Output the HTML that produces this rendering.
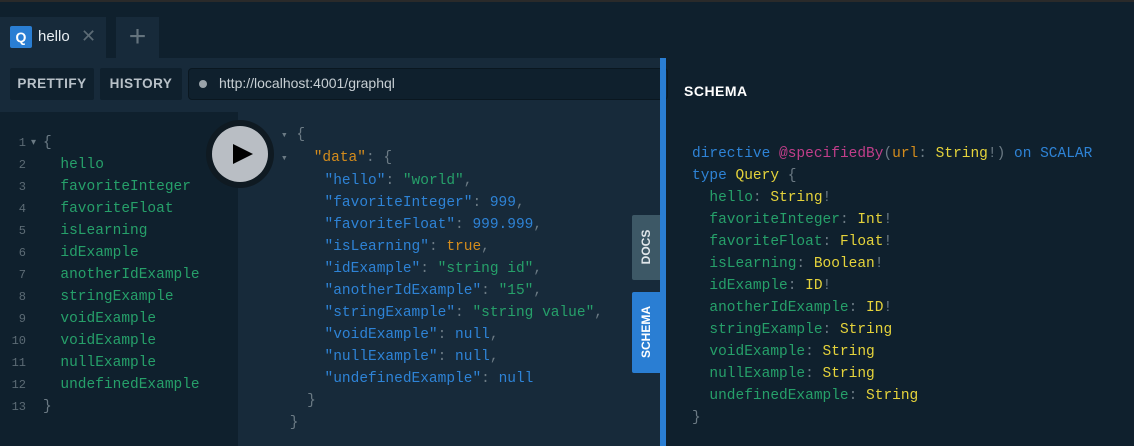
<!DOCTYPE html><html><head><style>
*{margin:0;padding:0;box-sizing:border-box}
html,body{width:1134px;height:446px;overflow:hidden}
body{background:#0f202d;position:relative;font-family:"Liberation Sans",sans-serif}
.abs{position:absolute}
.mono{font-family:"Liberation Mono",monospace;font-size:14.5px;white-space:pre}
.g{color:#26a06a}.b{color:#2e83d6}.o{color:#d48c1c}.y{color:#e5d33b}.p{color:#c13e8a}.gr{color:#6b7a84}
</style></head><body>
<div class="abs" style="left:0;top:0;width:1134px;height:2px;background:#2a2a2a"></div>
<div class="abs" style="left:0;top:17px;width:106px;height:41px;background:#172a3a"></div>
<div class="abs" style="left:10px;top:26px;width:22px;height:22px;background:#2a7ed3;border-radius:2px;color:#fff;font-weight:bold;font-size:14px;text-align:center;line-height:22px">Q</div>
<div class="abs" style="left:38px;top:28px;color:#e8eef2;font-size:15px">hello</div>
<div class="abs" style="left:81px;top:26px;color:#5c6b75;font-size:18px">✕</div>
<div class="abs" style="left:116px;top:17px;width:43px;height:41px;background:#172a3a;color:#64737d;font-size:30px;text-align:center;line-height:40px">+</div>
<div class="abs" style="left:0;top:58px;width:660px;height:54px;background:#172a3a"></div>
<div class="abs" style="left:10px;top:68px;width:84px;height:32px;background:#0f202d;border-radius:2px;color:#b8c1c8;font-size:13.5px;font-weight:bold;letter-spacing:.5px;text-align:center;line-height:32px">PRETTIFY</div>
<div class="abs" style="left:100px;top:68px;width:82px;height:32px;background:#0f202d;border-radius:2px;color:#b8c1c8;font-size:13.5px;font-weight:bold;letter-spacing:.5px;text-align:center;line-height:32px">HISTORY</div>
<div class="abs" style="left:188px;top:68px;width:480px;height:32px;background:#0f202d;border:1px solid #0a1720;border-radius:4px"></div>
<div class="abs" style="left:199px;top:80px;width:8px;height:8px;border-radius:50%;background:#9aa3aa"></div>
<div class="abs" style="left:219px;top:75px;color:#c7cfd4;font-size:14px">http://localhost:4001/graphql</div>
<div class="abs" style="left:238px;top:112px;width:422px;height:334px;background:#172a3a"></div>
<div class="abs" style="left:660px;top:58px;width:6px;height:388px;background:#2a7ed3"></div>
<div class="abs" style="left:632px;top:215px;width:28px;height:65px;background:#3d5866;border-radius:2px 0 0 2px"></div>
<div class="abs" style="left:646px;top:247px;transform:translate(-50%,-50%) rotate(-90deg);color:#e0e6ea;font-size:12px;font-weight:bold">DOCS</div>
<div class="abs" style="left:632px;top:292px;width:28px;height:81px;background:#2a7ed3;border-radius:2px 0 0 2px"></div>
<div class="abs" style="left:646px;top:332px;transform:translate(-50%,-50%) rotate(-90deg);color:#fff;font-size:12px;font-weight:bold">SCHEMA</div>
<div class="abs" style="left:206px;top:120px;width:68px;height:68px;border-radius:50%;background:#0f1a22"></div>
<div class="abs" style="left:212px;top:126px;width:56px;height:56px;border-radius:50%;background:#b9bec4"></div>
<svg class="abs" style="left:232px;top:143px" width="22" height="22"><path d="M1 1L21 11L1 21Z" fill="#000"/></svg>
<div class="abs" style="left:0;top:132px;width:26px;text-align:right;color:#5c6b75;font-size:12px;font-family:'Liberation Mono',monospace;line-height:22px;white-space:pre">1
2
3
4
5
6
7
8
9
10
11
12
13</div>
<div class="abs" style="left:31px;top:132px;color:#6b7a84;font-size:10px;line-height:22px">▾</div>
<div class="abs mono" style="left:43px;top:132px;line-height:22px"><span class="gr">{</span>
  <span class="g">hello</span>
  <span class="g">favoriteInteger</span>
  <span class="g">favoriteFloat</span>
  <span class="g">isLearning</span>
  <span class="g">idExample</span>
  <span class="g">anotherIdExample</span>
  <span class="g">stringExample</span>
  <span class="g">voidExample</span>
  <span class="g">voidExample</span>
  <span class="g">nullExample</span>
  <span class="g">undefinedExample</span>
<span class="gr">}</span></div>
<div class="abs mono" style="left:281px;top:124px;line-height:22px"><span class="gr" style="font-size:11px">▾</span> <span class="gr">{</span>
<span class="gr" style="font-size:11px">▾</span>   <span class="o">"data"</span><span class="gr">: {</span>
     <span class="b">"hello"</span><span class="gr">: </span><span class="g">"world"</span><span class="gr">,</span>
     <span class="b">"favoriteInteger"</span><span class="gr">: </span><span class="b">999</span><span class="gr">,</span>
     <span class="b">"favoriteFloat"</span><span class="gr">: </span><span class="b">999.999</span><span class="gr">,</span>
     <span class="b">"isLearning"</span><span class="gr">: </span><span class="o">true</span><span class="gr">,</span>
     <span class="b">"idExample"</span><span class="gr">: </span><span class="g">"string id"</span><span class="gr">,</span>
     <span class="b">"anotherIdExample"</span><span class="gr">: </span><span class="g">"15"</span><span class="gr">,</span>
     <span class="b">"stringExample"</span><span class="gr">: </span><span class="g">"string value"</span><span class="gr">,</span>
     <span class="b">"voidExample"</span><span class="gr">: </span><span class="b">null</span><span class="gr">,</span>
     <span class="b">"nullExample"</span><span class="gr">: </span><span class="b">null</span><span class="gr">,</span>
     <span class="b">"undefinedExample"</span><span class="gr">: </span><span class="b">null</span>
   <span class="gr">}</span>
 <span class="gr">}</span></div>
<div class="abs" style="left:684px;top:83px;color:#fff;font-size:14px;font-weight:bold;letter-spacing:.5px">SCHEMA</div>
<div class="abs mono" style="left:692px;top:143px;line-height:22px"><span class="b">directive</span> <span class="p">@specifiedBy</span><span class="gr">(</span><span class="o">url</span><span class="gr">: </span><span class="y">String</span><span class="gr">!)</span> <span class="b">on</span> <span class="b">SCALAR</span>
<span class="b">type</span> <span class="y">Query</span> <span class="gr">{</span>
  <span class="g">hello</span><span class="gr">: </span><span class="y">String</span><span class="gr">!</span>
  <span class="g">favoriteInteger</span><span class="gr">: </span><span class="y">Int</span><span class="gr">!</span>
  <span class="g">favoriteFloat</span><span class="gr">: </span><span class="y">Float</span><span class="gr">!</span>
  <span class="g">isLearning</span><span class="gr">: </span><span class="y">Boolean</span><span class="gr">!</span>
  <span class="g">idExample</span><span class="gr">: </span><span class="y">ID</span><span class="gr">!</span>
  <span class="g">anotherIdExample</span><span class="gr">: </span><span class="y">ID</span><span class="gr">!</span>
  <span class="g">stringExample</span><span class="gr">: </span><span class="y">String</span>
  <span class="g">voidExample</span><span class="gr">: </span><span class="y">String</span>
  <span class="g">nullExample</span><span class="gr">: </span><span class="y">String</span>
  <span class="g">undefinedExample</span><span class="gr">: </span><span class="y">String</span>
<span class="gr">}</span></div>
</body></html>
